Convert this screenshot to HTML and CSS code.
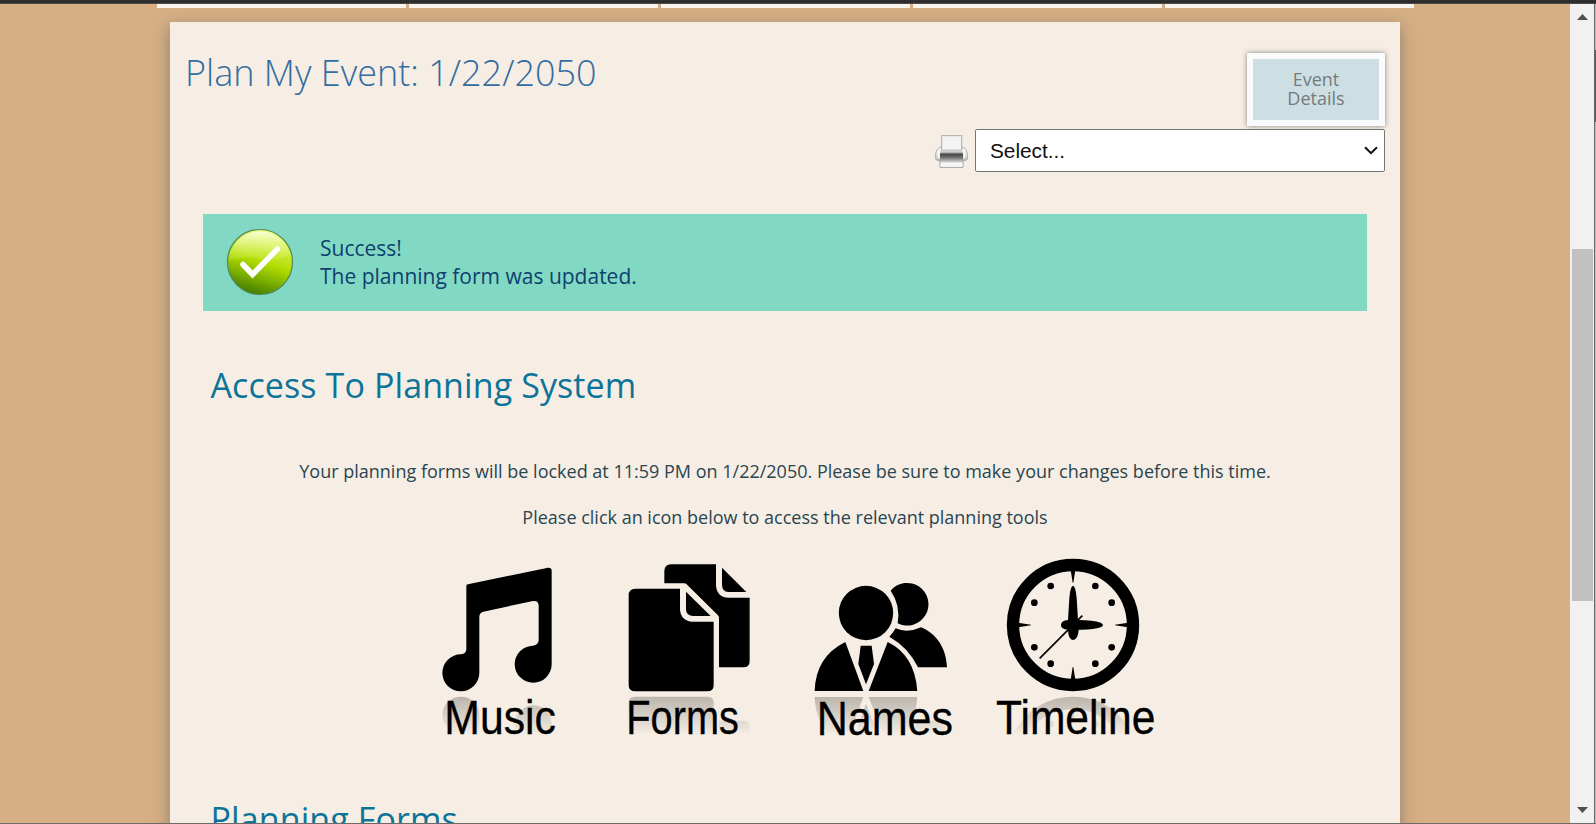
FILE: index.html
```html
<!DOCTYPE html>
<html lang="en">
<head>
<meta charset="utf-8">
<title>Plan My Event</title>
<link rel="stylesheet" href="styles.css">
</head>
<body>
<div class="topbar"></div>
<div class="viewport">
  <main class="page">
    <nav class="tabs"><i></i><i></i><i></i><i></i><i></i></nav>
    <section class="card">
      <header class="head">
        <h1>Plan My Event: 1/22/2050</h1>
        <a class="details">Event<br>Details</a>
      </header>
      <div class="printrow">
        <svg class="printer" width="33" height="33" viewBox="0 0 99 99">
          <defs>
            <linearGradient id="pb" x1="0" y1="0" x2="0" y2="1"><stop offset="0" stop-color="#f4f4f4"/><stop offset=".5" stop-color="#e2e2e2"/><stop offset="1" stop-color="#b5b5b5"/></linearGradient>
            <linearGradient id="pd" x1="0" y1="0" x2="0" y2="1"><stop offset="0" stop-color="#8a8a8a"/><stop offset=".2" stop-color="#484848"/><stop offset=".5" stop-color="#777"/><stop offset="1" stop-color="#e4e4e4"/></linearGradient>
          </defs>
          <path d="M14 37H85Q95 42 98 58V70Q97 77 86 77H13Q2 77 1 70V58Q4 42 14 37Z" fill="url(#pb)" stroke="#b0b0b0" stroke-width="3"/>
          <rect x="20" y="2" width="60" height="46" fill="#f4f4f4" stroke="#aaa" stroke-width="3"/>
          <path d="M19 43H81V55H19Z" fill="#cdcdcd"/>
          <path d="M11 44V70M88 44V70" stroke="#fff" stroke-width="5"/>
          <path d="M15 53H84V84H15Z" fill="url(#pd)"/>
          <path d="M15 74V97H84V74" fill="none" stroke="#a2a2a2" stroke-width="3"/>
          <path d="M17 83H82V95H17Z" fill="#f7f7f7"/>
        </svg>
        <div class="selectbox">
          <select class="select"><option>Select...</option></select>
          <svg class="chev" width="14" height="9" viewBox="0 0 14 9"><path d="M1 1.200L7 7.200L13 1.200" fill="none" stroke="#111" stroke-width="2"/></svg>
        </div>
      </div>
      <div class="alert">
        <svg class="ok" width="68" height="68" viewBox="0 0 68 68">
          <defs>
            <linearGradient id="g1" x1=".65" y1="0" x2=".35" y2="1"><stop offset="0" stop-color="#e8ff80"/><stop offset=".5" stop-color="#b2dc00"/><stop offset=".72" stop-color="#80b400"/><stop offset="1" stop-color="#3f7800"/></linearGradient>
            <linearGradient id="g2" x1="0" y1="0" x2="0" y2="1"><stop offset="0" stop-color="#fbffd8" stop-opacity=".95"/><stop offset="1" stop-color="#d4ef50" stop-opacity=".2"/></linearGradient>
          </defs>
          <circle cx="34" cy="34" r="32.500" fill="url(#g1)" stroke="#55895a" stroke-width="1.200"/>
          <path d="M2.500 33A31.500 31.500 0 0 1 64.500 27Q52 33 38 31.500Q18 27 2.500 33Z" fill="url(#g2)"/>
          <path d="M17 36.500L26.500 46.500L51.500 21" fill="none" stroke="#fff" stroke-width="5.500" stroke-linecap="round"/>
        </svg>
        <p class="msg">Success!<br>The planning form was updated.</p>
      </div>
      <h2 class="h-access">Access To Planning System</h2>
      <p class="note note-lock">Your planning forms will be locked at 11:59 PM on 1/22/2050. Please be sure to make your changes before this time.</p>
      <p class="note note-click">Please click an icon below to access the relevant planning tools</p>
      <div class="tools">
        <svg width="180" height="195" viewBox="0 0 540 585">
          <defs>
            <linearGradient id="fade" gradientUnits="userSpaceOnUse" x1="0" y1="440" x2="0" y2="555"><stop offset="0" stop-color="#fff" stop-opacity=".24"/><stop offset="1" stop-color="#fff" stop-opacity="0"/></linearGradient>
            <mask id="m" maskUnits="userSpaceOnUse" x="0" y="438" width="1200" height="120"><rect x="0" y="438" width="1200" height="120" fill="url(#fade)"/></mask>
          </defs>
          <path id="music" d="M109 108Q109 104 114 103L354 53Q365 52 365 62V342A55.500 55.500 0 1 1 309 287Q326 284 326 270V166Q325 151 309 153L160 185Q148 188 148 200V368A55.500 55.500 0 1 1 93 313Q109 312 109 298Z"/>
          <g mask="url(#m)"><use href="#music" transform="translate(0 864) scale(1 -1)"/></g>
          <text class="label" x="43" y="551" textLength="335" lengthAdjust="spacingAndGlyphs">Music</text>
        </svg>
        <svg width="180" height="195" viewBox="540 0 540 585">
          <g id="forms">
            <path d="M703 100V64Q703 43 724 43H858V107Q862 143 896 143H959V333Q959 352 940 352H867V204Q867 200 864 196L769 102Q767 100 763 100Z"/>
            <path d="M876 53L949 126H895Q876 124 876 104Z"/>
            <path d="M596 136Q596 116 616 116H750V180Q754 214 788 215H851V405Q851 424 832 424H616Q596 424 596 405Z"/>
            <path d="M768 125L842 198H788Q768 196 768 178Z"/>
          </g>
          <g mask="url(#m)"><use href="#forms" transform="translate(0 864) scale(1 -1)"/></g>
          <text class="label" x="589" y="551" textLength="338" lengthAdjust="spacingAndGlyphs">Forms</text>
        </svg>
        <svg width="190" height="195" viewBox="0 0 570 585">
          <g id="names">
            <circle cx="228" cy="189" r="81.500"/>
            <path d="M302 122A64 64 0 1 1 323 220Q332 165 302 122Z"/>
            <path d="M317 235Q352 251 393 232C440 251 469 295 471 352H384Q356 293 298 260Q309 249 317 235Z"/>
            <path d="M74 423Q77 320 166 276L220 423ZM236 423L293 276Q374 315 382 423Z"/>
            <path d="M212 287H245L252 342L228 403L205 342Z"/>
          </g>
          <g mask="url(#m)"><use href="#names" transform="translate(0 864) scale(1 -1)"/></g>
          <text class="label" x="80" y="555" textLength="409" lengthAdjust="spacingAndGlyphs">Names</text>
        </svg>
        <svg width="190" height="195" viewBox="570 0 570 585">
          <g id="clock">
            <circle cx="849" cy="225" r="180" fill="none" stroke="#000" stroke-width="37"/>
            <path d="M842 60H856L850 98H848ZM842 390H856L850 351H848ZM684 218V232L723 226V224ZM1014 218V232L975 226V224Z"/>
            <g><circle cx="782" cy="108" r="10"/><circle cx="916" cy="108" r="10"/><circle cx="733" cy="158" r="10"/><circle cx="965" cy="158" r="10"/><circle cx="733" cy="292" r="10"/><circle cx="965" cy="292" r="10"/><circle cx="782" cy="341" r="10"/><circle cx="916" cy="341" r="10"/></g>
            <path d="M849 107Q857 108 860 145L864 210Q910 210 932 218Q946 225 932 232Q910 240 866 239Q864 269 849 270Q835 269 834 239Q813 238 813 225Q813 212 834 210L838 145Q841 108 849 107Z"/>
            <path d="M749 325L877 197" stroke="#000" stroke-width="5"/>
          </g>
          <g mask="url(#m)"><use href="#clock" transform="translate(0 864) scale(1 -1)"/></g>
          <text class="label" x="618" y="551" textLength="478" lengthAdjust="spacingAndGlyphs">Timeline</text>
        </svg>
      </div>
      <h2 class="h-forms">Planning Forms</h2>
    </section>
  </main>
  <aside class="scroll">
    <svg width="11" height="6" viewBox="0 0 11 6"><path d="M0 6L5.500 0L11 6Z" fill="#505050"/></svg>
    <div class="thumb"></div>
    <svg width="11" height="6" viewBox="0 0 11 6"><path d="M0 0L5.500 6L11 0Z" fill="#505050"/></svg>
  </aside>
  <div class="edge"><div class="edge-thumb"></div></div>
</div>
</body>
</html>
```
FILE: styles.css
```css
* { box-sizing: border-box; }
body {
  margin: 0;
  height: 824px;
  overflow: hidden;
  display: flex;
  flex-direction: column;
  background: #d6af84;
  font-family: "Open Sans", sans-serif;
}
h1, h2, p { margin: 0; font-weight: 400; white-space: nowrap; }
svg { display: block; flex: none; }
.topbar { height: 4px; flex: none; background: #2d2d2d; border-bottom: 1px solid #4e4a46; }
.viewport { height: 820px; display: flex; border-bottom: 1px solid #6e6a67; }
.page { width: 1570px; height: 819px; overflow: hidden; }
.tabs { display: flex; gap: 3px; margin-left: 157px; height: 4px; position: relative; z-index: 1; }
.tabs i { width: 249px; background: #f9f4ee; }
.card {
  width: 1230px;
  height: 900px;
  margin: 14px 0 0 170px;
  background: #f6eee4;
  box-shadow: 0 5px 15px rgba(90, 95, 95, .6);
}
.head { height: 107px; padding: 31px 15px 0; display: flex; justify-content: space-between; align-items: flex-start; }
h1 { font-size: 36px; line-height: 40px; font-weight: 300; color: #336ca0; }
.details {
  width: 138px;
  height: 73px;
  border: 6px solid #f9fafc;
  background: #cedfe3;
  box-shadow: 0 0 5px rgba(0, 0, 0, .45);
  color: #757b7d;
  font-size: 18px;
  line-height: 19px;
  padding-top: 11px;
  text-align: center;
}
.printrow { display: flex; justify-content: flex-end; padding-right: 15px; height: 84.500px; }
.printer { margin: 6px 7px 0 0; }
.selectbox { position: relative; width: 410px; height: 43px; }
.select {
  appearance: none;
  width: 410px;
  height: 43px;
  padding: 0 0 0 14px;
  border: 1px solid #767676;
  border-radius: 2px;
  background: #fff;
  color: #111;
  font: 20.800px "Liberation Sans", Arial, sans-serif;
}
.chev { position: absolute; right: 7px; top: 17px; }
.alert {
  width: 1164px;
  height: 97.500px;
  margin-left: 33px;
  background: #81d9c4;
  display: flex;
  padding: 14.500px 0 0 23px;
}
.msg { margin: 6px 0 0 26px; font-size: 21px; line-height: 28px; color: #0e3f6f; }
h2 { font-size: 34px; line-height: 46px; color: #0d7499; }
.h-access { margin: 51px 0 0 40.500px; letter-spacing: .1px; }
.note { text-align: center; font-size: 18px; line-height: 26px; color: #2a4450; }
.note-lock { margin-top: 50px; }
.note-click { margin-top: 20px; }
.tools { display: flex; margin: 20px 0 0 260px; }
.label { font-family: "Liberation Sans", Arial, sans-serif; font-size: 146px; stroke: #000; stroke-width: 1px; }
.h-forms { margin: 51px 0 0 40.500px; letter-spacing: .1px; }
.scroll {
  width: 24px;
  height: 819px;
  background: #f1f1f1;
  display: flex;
  flex-direction: column;
  align-items: center;
  justify-content: space-between;
  padding: 10px 0;
}
.thumb { width: 21px; height: 352px; background: #c1c1c1; margin-bottom: -23px; }
.edge { width: 2px; height: 819px; background: #c2c2c2; border-left: 1px solid #666; padding-top: 46px; }
.edge-thumb { height: 72px; background: #5b5b5b; }
```
